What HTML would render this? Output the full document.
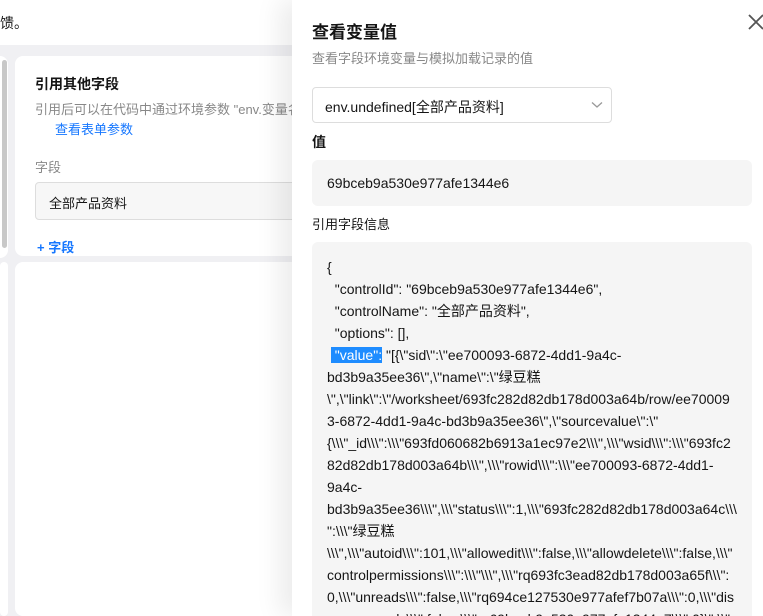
<!DOCTYPE html>
<html style="width:763px;height:616px;overflow:hidden"><head><meta charset="utf-8"><style>
*{margin:0;padding:0;box-sizing:border-box}
body{width:763px;height:616px;overflow:hidden;position:relative;background:#f0f0f3;font-family:"Liberation Sans","Noto Sans CJK SC",sans-serif;color:#151515}
.top{position:absolute;left:0;top:0;width:763px;height:45px;background:#fff}
.card{position:absolute;background:#fff;border-radius:8px}
.drawer{position:absolute;left:292px;top:0;width:471px;height:616px;overflow:hidden;background:#fff;box-shadow:-12px 0 24px rgba(0,0,0,.08)}
.code{position:absolute;left:20px;top:242px;width:440px;height:400px;background:#f5f5f5;border-radius:6px;padding:14px 0 0 15px;font-size:14px;line-height:22px;color:#151515;white-space:pre}
.hl{background:#1e8cff;color:#fff}
</style></head><body>
<div class="top"><div style="position:absolute;left:0;top:13px;font-size:14px">馈。</div></div>
<div class="card" style="left:0;top:56px;width:8px;height:202px;border-radius:0 8px 8px 0"></div>
<div style="position:absolute;left:2px;top:60px;width:5px;height:188px;background:#c8c8c8;border-radius:3px"></div>
<div class="card" style="left:15px;top:56px;width:300px;height:200px"></div>
<div class="card" style="left:0;top:262px;width:8px;height:354px"></div>
<div class="card" style="left:15px;top:262px;width:300px;height:354px"></div>
<div style="position:absolute;left:35px;top:74px;font-size:14px;font-weight:bold">引用其他字段</div>
<div style="position:absolute;left:35px;top:99px;font-size:13px;color:#888;white-space:nowrap">引用后可以在代码中通过环境参数 "env.变量名</div>
<div style="position:absolute;left:55px;top:119px;font-size:13px;color:#1677ff">查看表单参数</div>
<div style="position:absolute;left:35px;top:157px;font-size:13px;color:#888">字段</div>
<div style="position:absolute;left:35px;top:182px;width:280px;height:38px;border:1px solid #ddd;border-radius:4px;background:#f7f7f7;font-size:13px;padding:10px 0 0 13px">全部产品资料</div>
<div style="position:absolute;left:37px;top:237px;font-size:13px;color:#1677ff;font-weight:bold">+ 字段</div>

<div class="drawer">
<div style="position:absolute;left:20px;top:18px;font-size:17px;font-weight:bold">查看变量值</div>
<svg style="position:absolute;left:456px;top:14px" width="16" height="16" viewBox="0 0 16 16"><path d="M1 1L15 15M15 1L1 15" stroke="#555" stroke-width="1.8"/></svg>
<div style="position:absolute;left:20px;top:48px;font-size:13px;color:#888">查看字段环境变量与模拟加载记录的值</div>
<div style="position:absolute;left:20px;top:87px;width:300px;height:36px;border:1px solid #ddd;border-radius:4px;font-size:14px;padding:9px 0 0 12px">env.undefined[全部产品资料]
<svg style="position:absolute;right:8px;top:13px" width="12" height="8" viewBox="0 0 12 8"><path d="M1 1.5L6 6L11 1.5" fill="none" stroke="#999" stroke-width="1.3"/></svg></div>
<div style="position:absolute;left:20px;top:132px;font-size:14px;font-weight:bold">值</div>
<div style="position:absolute;left:20px;top:160px;width:440px;height:46px;background:#f5f5f5;border-radius:6px;font-size:14px;padding:15px 0 0 15px">69bceb9a530e977afe1344e6</div>
<div style="position:absolute;left:20px;top:214px;font-size:13px">引用字段信息</div>
<div class="code">{
  "controlId": "69bceb9a530e977afe1344e6",
  "controlName": "全部产品资料",
  "options": [],
 <span class="hl"> "value":</span> "[{\"sid\":\"ee700093-6872-4dd1-9a4c-
bd3b9a35ee36\",\"name\":\"绿豆糕
\",\"link\":\"/worksheet/693fc282d82db178d003a64b/row/ee70009
3-6872-4dd1-9a4c-bd3b9a35ee36\",\"sourcevalue\":\"
{\\\"_id\\\":\\\"693fd060682b6913a1ec97e2\\\",\\\"wsid\\\":\\\"693fc2
82d82db178d003a64b\\\",\\\"rowid\\\":\\\"ee700093-6872-4dd1-
9a4c-
bd3b9a35ee36\\\",\\\"status\\\":1,\\\"693fc282d82db178d003a64c\\\
":\\\"绿豆糕
\\\",\\\"autoid\\\":101,\\\"allowedit\\\":false,\\\"allowdelete\\\":false,\\\"
controlpermissions\\\":\\\"\\\",\\\"rq693fc3ead82db178d003a65f\\\":
0,\\\"unreads\\\":false,\\\"rq694ce127530e977afef7b07a\\\":0,\\\"dis
cussunreads\\\":false,\\\"rq69bceb9a530e977afe1344e7\\\":0}\",\\"</div>
</div>
</body></html>
